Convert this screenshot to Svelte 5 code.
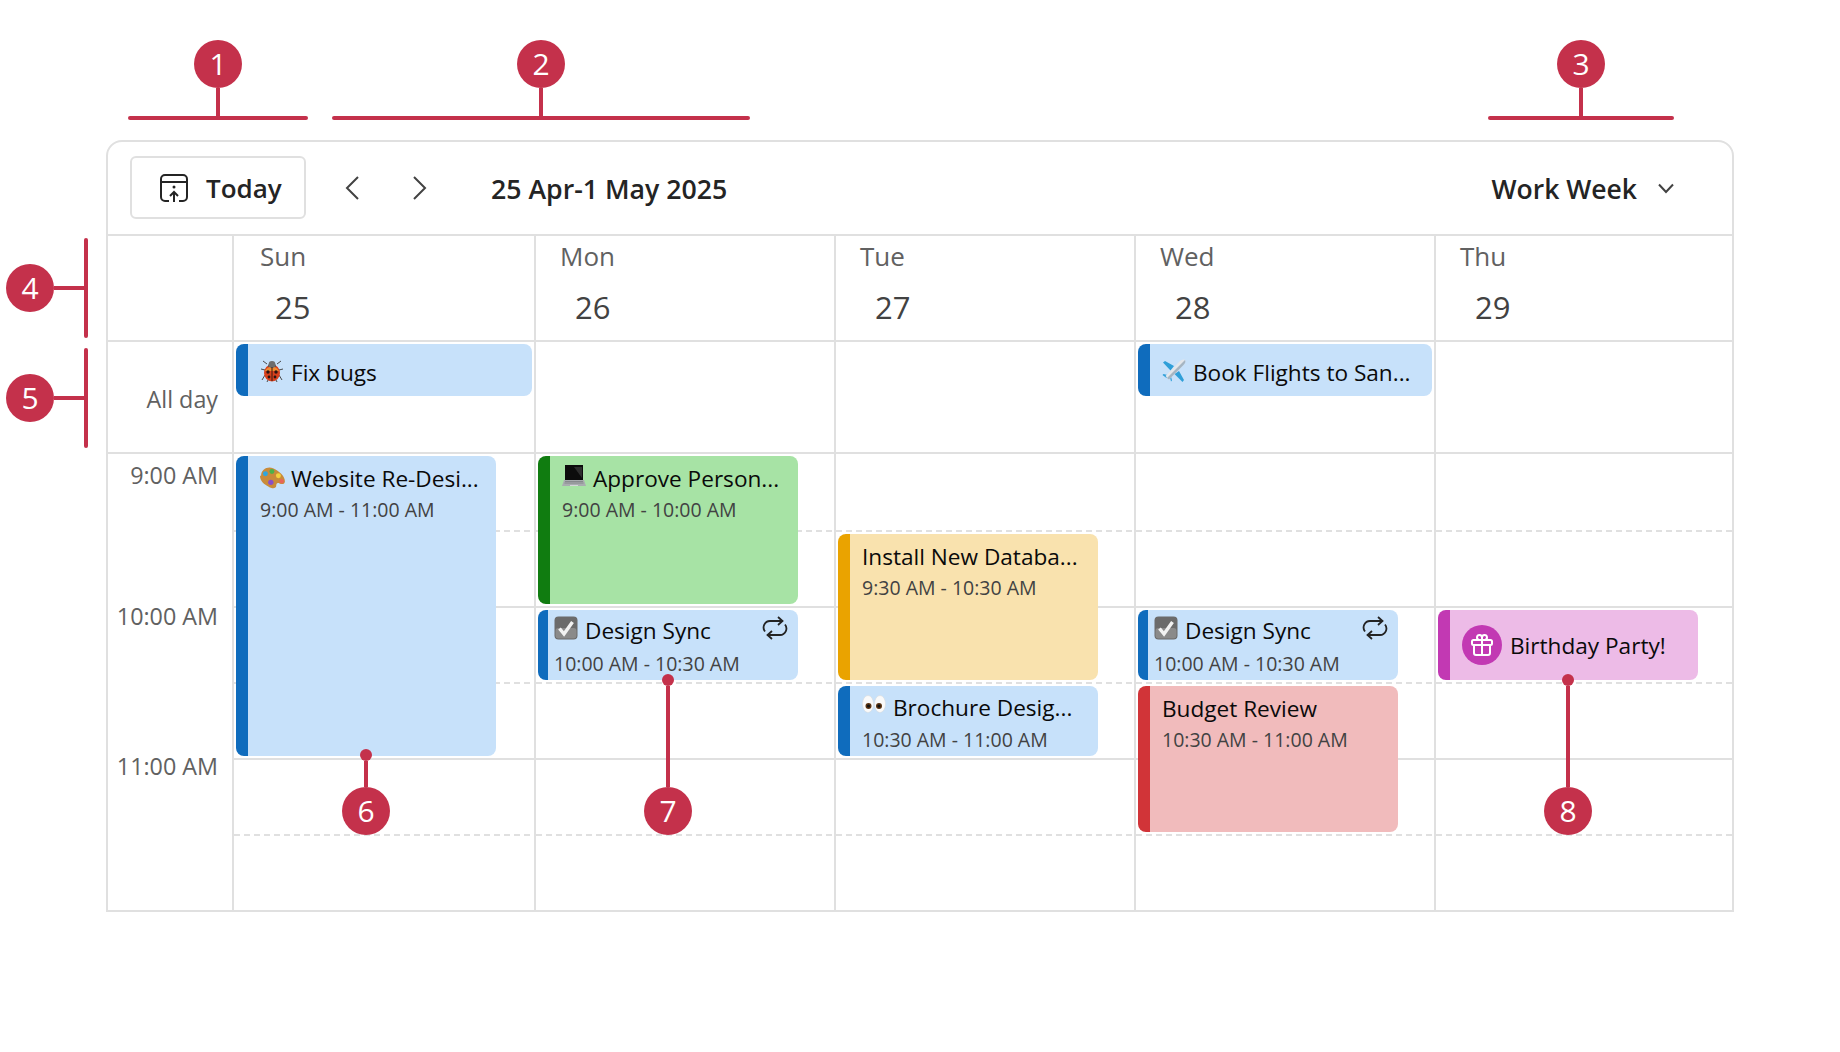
<script>
	const days = [
		{ name: 'Sun', date: 25 },
		{ name: 'Mon', date: 26 },
		{ name: 'Tue', date: 27 },
		{ name: 'Wed', date: 28 },
		{ name: 'Thu', date: 29 }
	];

	// nudge: the labels don't sit at the same distance from their line
	const hours = [
		{ label: '9:00 AM', row: 3, nudge: 13 },
		{ label: '10:00 AM', row: 5, nudge: 0 },
		{ label: '11:00 AM', row: 7, nudge: -2 }
	];

	const slots = [3, 4, 5, 6, 7, 8];

	// col: 2-6 in the grid, row/span are half hour slots starting at row 3
	const events = [
		{ col: 2, row: 2, span: 1, kind: 'allday blue', icon: 'bug', title: 'Fix bugs' },
		{ col: 5, row: 2, span: 1, kind: 'allday blue', icon: 'plane', title: 'Book Flights to San...' },
		{ col: 2, row: 3, span: 4, kind: 'blue', icon: 'palette', title: 'Website Re-Desi...', time: '9:00 AM - 11:00 AM' },
		{ col: 3, row: 3, span: 2, kind: 'green', icon: 'laptop', title: 'Approve Person...', time: '9:00 AM - 10:00 AM' },
		{ col: 3, row: 5, span: 1, kind: 'blue short sync', icon: 'check', title: 'Design Sync', time: '10:00 AM - 10:30 AM', repeat: true },
		{ col: 4, row: 4, span: 2, kind: 'yellow', title: 'Install New Databa...', time: '9:30 AM - 10:30 AM' },
		{ col: 4, row: 6, span: 1, kind: 'blue sync', icon: 'eyes', title: 'Brochure Desig...', time: '10:30 AM - 11:00 AM' },
		{ col: 5, row: 5, span: 1, kind: 'blue short sync', icon: 'check', title: 'Design Sync', time: '10:00 AM - 10:30 AM', repeat: true },
		{ col: 5, row: 6, span: 2, kind: 'red', title: 'Budget Review', time: '10:30 AM - 11:00 AM' },
		{ col: 6, row: 5, span: 1, kind: 'pink birthday', gift: true, title: 'Birthday Party!' }
	];

	const topMarks = [
		{ n: 1, left: 128, width: 180 },
		{ n: 2, left: 332, width: 418 },
		{ n: 3, left: 1488, width: 186 }
	];

	const sideMarks = [
		{ n: 4, top: 238, height: 100 },
		{ n: 5, top: 348, height: 100 }
	];

	const bottomMarks = [
		{ n: 6, left: 366, top: 755, stem: 26 },
		{ n: 7, left: 668, top: 680, stem: 101 },
		{ n: 8, left: 1568, top: 680, stem: 101 }
	];
</script>

{#snippet emoji(name)}
	{#if name === 'bug'}
		<svg class="emoji" viewBox="0 0 24 24">
			<g stroke="#4a4a4a" stroke-width="1" fill="none">
				<path d="M7 5 3 2M17 5l4-3M5 11 1 10M19 11l4-1M5 16l-3 5M19 16l3 5M8 21l-1 2M16 21l1 2" />
			</g>
			<ellipse cx="12" cy="14" rx="8" ry="8.5" fill="#d8401c" />
			<path d="M5 12a8 8 0 0 1 14 0z" fill="#f08a30" />
			<path d="M8 8a4 4 0 0 1 8 0z" fill="#555" />
			<circle cx="12" cy="5.5" r="3.4" fill="#6d6d6d" />
			<path d="M12 8v14" stroke="#3a1a10" stroke-width="1" />
			<circle cx="8" cy="13" r="1.7" fill="#2a1410" />
			<circle cx="16" cy="13" r="1.7" fill="#2a1410" />
			<circle cx="9" cy="18" r="1.4" fill="#2a1410" />
			<circle cx="15" cy="18" r="1.4" fill="#2a1410" />
		</svg>
	{:else if name === 'plane'}
		<svg class="emoji" viewBox="0 0 24 24">
			<path d="M12 7 3 2 1 3.500l7.500 8zM17 12l5 9-1.500 2-8-8z" fill="#2f9fd8" />
			<path d="M5.500 16 1.500 15 .5 16l4 3zM8 18.500 9 22.500l1-1-1-4z" fill="#2f9fd8" />
			<path d="M23 1c-1.500-1-4 0-5.500 1.500L3.500 17 7 20.500 21.500 6C23 4.500 24 2.500 23 1z" fill="#e3e6ea" />
			<path d="M23 1 5 19l2 1.500L21.500 6C23 4.500 24 2.500 23 1z" fill="#a5b5c2" />
		</svg>
	{:else if name === 'palette'}
		<svg class="emoji wide" viewBox="0 0 24 22">
			<path d="M1 9C1 3 7 0 12 2c5 2 11 7 11 12 0 3-3 3-5 2-2-1-3 0-3 2 0 3-4 3-7 1-4-2-8-5-8-10z" fill="#c98b3a" />
			<circle cx="5" cy="7" r="2.300" fill="#2fa6de" />
			<circle cx="11" cy="5" r="2.300" fill="#4eb24a" />
			<circle cx="17" cy="9" r="2.300" fill="#f3d23c" />
			<circle cx="20" cy="14" r="2" fill="#e8655a" />
			<circle cx="10" cy="15" r="2.500" fill="#8a4fc7" />
		</svg>
	{:else if name === 'laptop'}
		<svg class="emoji" viewBox="0 0 24 24">
			<path d="M3 1h18v15H3z" fill="#0c0c0c" />
			<path d="M12 3h8v11z" fill="#2d2d2d" />
			<path d="M2 16h20l2 6H0z" fill="#a9adb0" />
			<path d="M3 17.500h18M2.500 19h19" stroke="#7d8184" stroke-width=".8" />
			<path d="M8 21h8v1H8z" fill="#d5d7d9" />
		</svg>
	{:else if name === 'check'}
		<svg class="emoji" viewBox="0 0 24 24">
			<rect x=".5" y=".5" width="23" height="23" rx="4" fill="#6b6b6b" />
			<rect x="1.500" y="12" width="21" height="10.500" rx="3" fill="#8a8a8a" />
			<path d="M5.500 12.500 10 18l8.500-12" fill="none" stroke="#f2f2f2" stroke-width="3.400" />
		</svg>
	{:else if name === 'eyes'}
		<svg class="emoji" viewBox="0 0 24 24">
			<ellipse cx="6" cy="11" rx="5.500" ry="8.500" fill="#fafafa" stroke="#d8d8d8" stroke-width=".5" />
			<ellipse cx="18" cy="11" rx="5.500" ry="8.500" fill="#fafafa" stroke="#d8d8d8" stroke-width=".5" />
			<circle cx="6.500" cy="13" r="3" fill="#5a3312" />
			<circle cx="17" cy="13" r="3" fill="#5a3312" />
			<circle cx="6.500" cy="13" r="1.600" fill="#111" />
			<circle cx="17" cy="13" r="1.600" fill="#111" />
		</svg>
	{/if}
{/snippet}

<div class="page">
	<section class="calendar">
		<header class="toolbar">
			<button class="today">
				<svg width="28" height="28" viewBox="0 0 28 28" fill="none" stroke="#242424" stroke-width="2">
					<path d="M9 27H5a4 4 0 0 1-4-4V5a4 4 0 0 1 4-4h18a4 4 0 0 1 4 4v18a4 4 0 0 1-4 4h-4" />
					<path d="M1 8h26" />
					<path d="M14 28V18m-4 4 4-4 4 4" />
					<circle cx="14" cy="13" r="1.500" fill="#242424" stroke="none" />
				</svg>
				<span>Today</span>
			</button>
			<button class="nav first" aria-label="Previous">
				<svg width="14" height="24" viewBox="0 0 14 24" fill="none" stroke="#424242" stroke-width="2"><path d="M13 1 2 12l11 11" /></svg>
			</button>
			<button class="nav" aria-label="Next">
				<svg width="14" height="24" viewBox="0 0 14 24" fill="none" stroke="#424242" stroke-width="2"><path d="m1 1 11 11L1 23" /></svg>
			</button>
			<div class="range">25 Apr-1 May 2025</div>
			<div class="view">
				<span>Work Week</span>
				<svg width="16" height="11" viewBox="0 0 16 11" fill="none" stroke="#424242" stroke-width="2"><path d="m1 1.500 7 7.500 7-7.500" /></svg>
			</div>
		</header>

		<div class="grid">
			<div class="corner"></div>
			{#each days as d, i}
				<div class="dayhead" class:first={i === 0} class:last={i === 4} style="grid-column:{i + 2}">
					<div class="dayname">{d.name}</div>
					<div class="daydate">{d.date}</div>
				</div>
			{/each}

			<div class="allday-label">All day</div>
			{#each days as d, i}
				<div class="allday-cell" class:last={i === 4} style="grid-column:{i + 2}"></div>
			{/each}

			{#each hours as h}
				<div class="hour" style="grid-row:{h.row} / span 2">
					<span style="margin-top:{h.nudge}px">{h.label}</span>
				</div>
			{/each}

			{#each days as d, i}
				{#each slots as s}
					<div
						class="slot"
						class:dash={s % 2 === 1}
						class:solid={s % 2 === 0 && s < 8}
						class:last={i === 4}
						style="grid-column:{i + 2};grid-row:{s}"
					></div>
				{/each}
			{/each}

			{#each events as e}
				<article class="event {e.kind}" style="grid-column:{e.col};grid-row:{e.row} / span {e.span}">
					{#if e.gift}
						<span class="gift">
							<svg width="24" height="24" viewBox="0 0 24 24" fill="none" stroke="#fff" stroke-width="2">
								<rect x="2" y="7" width="20" height="5" rx="1.500" />
								<path d="M4 12v8a2 2 0 0 0 2 2h12a2 2 0 0 0 2-2v-8M12 7v15" />
								<path d="M12 7H9a2.500 2.500 0 1 1 3-2.500zM12 7h3a2.500 2.500 0 1 0-3-2.500z" />
							</svg>
						</span>
					{/if}
					<div class="content">
						<div class="title">
							{#if e.icon}{@render emoji(e.icon)}{/if}
							<span>{e.title}</span>
							{#if e.repeat}
								<svg class="repeat" width="26" height="24" viewBox="0 0 26 24" fill="none" stroke="#242424" stroke-width="1.800">
									<path d="M20 5H8a6.500 6.500 0 0 0-5 10.500M6 19h12a6.500 6.500 0 0 0 5-10.500" />
									<path d="m16 1 4.500 4-4.500 4M10 15l-4.500 4 4.500 4" />
								</svg>
							{/if}
						</div>
						{#if e.time}<div class="time">{e.time}</div>{/if}
					</div>
				</article>
			{/each}
		</div>
	</section>

	{#each topMarks as m}
		<div class="mark-top" style="left:{m.left}px;width:{m.width}px">
			<span class="badge">{m.n}</span>
			<span class="stem"></span>
			<span class="bar"></span>
		</div>
	{/each}

	{#each sideMarks as m}
		<div class="mark-side" style="top:{m.top}px;height:{m.height}px">
			<span class="badge">{m.n}</span>
			<span class="stem"></span>
			<span class="bar"></span>
		</div>
	{/each}

	{#each bottomMarks as m}
		<div class="mark-bottom" style="left:{m.left}px;top:{m.top}px">
			<span class="dot"></span>
			<span class="stem" style="height:{m.stem}px"></span>
			<span class="badge">{m.n}</span>
		</div>
	{/each}
</div>

<style>
	:global(body) {
		margin: 0;
		background: #fff;
	}
	.page {
		position: relative;
		height: 1052px;
		padding: 140px 106px 0;
		box-sizing: border-box;
		font-family: 'Open Sans', 'Noto Sans', sans-serif;
		color: #242424;
	}
	.calendar {
		width: 1628px;
		height: 772px;
		box-sizing: border-box;
		border: 2px solid #e0e0e0;
		border-radius: 16px 16px 0 0;
		display: flex;
		flex-direction: column;
	}
	.toolbar {
		flex: none;
		height: 94px;
		box-sizing: border-box;
		border-bottom: 2px solid #e0e0e0;
		display: flex;
		align-items: flex-start;
		padding: 14px 0 0 22px;
	}
	button {
		background: none;
		border: 0;
		padding: 0;
		font: inherit;
		color: inherit;
		display: flex;
		align-items: center;
	}
	.today {
		width: 176px;
		height: 63px;
		box-sizing: border-box;
		border: 2px solid #e0e0e0;
		border-radius: 6px;
		padding-left: 28px;
		gap: 18px;
		font-size: 26px;
		font-weight: 600;
	}
	.today span {
		margin-top: 1px;
	}
	.nav {
		height: 63px;
		margin-left: 54px;
	}
	.nav.first {
		margin-left: 39px;
	}
	.range {
		margin-left: 64px;
		font-size: 26.7px;
		font-weight: 600;
		line-height: 66px;
		white-space: nowrap;
	}
	.view {
		margin-left: auto;
		margin-right: 58px;
		display: flex;
		align-items: center;
		gap: 21px;
		height: 65px;
		font-size: 26.5px;
		font-weight: 600;
	}
	.grid {
		flex: 1;
		display: grid;
		grid-template-columns: 126px 302px 300px 300px 300px 296px;
		grid-template-rows: 106px 112px 78px 76px 76px 76px 76px 74px;
	}
	.corner,
	.dayhead,
	.allday-label,
	.allday-cell {
		border-bottom: 2px solid #e0e0e0;
		border-right: 2px solid #e0e0e0;
		box-sizing: border-box;
	}
	.corner {
		grid-column: 1;
		grid-row: 1;
	}
	.dayhead {
		grid-row: 1;
		padding: 0 0 0 24px;
	}
	.dayhead.first {
		padding-left: 26px;
	}
	.dayhead.first .daydate {
		margin-left: 15px;
	}
	.dayname {
		font-size: 26px;
		line-height: 36px;
		margin-top: 2px;
		color: #616161;
	}
	.daydate {
		font-size: 31px;
		line-height: 42px;
		margin: 12px 0 0 15px;
		color: #424242;
	}
	.allday-label {
		grid-column: 1;
		grid-row: 2;
		font-size: 23.3px;
		color: #616161;
		text-align: right;
		padding: 41px 14px 0 0;
	}
	.allday-cell {
		grid-row: 2;
	}
	.hour {
		grid-column: 1;
		box-sizing: border-box;
		display: flex;
		justify-content: flex-end;
		align-items: flex-start;
		font-size: 23.3px;
		line-height: 16px;
		color: #616161;
		border-right: 2px solid #e0e0e0;
		padding-right: 14px;
	}
	.slot {
		box-sizing: border-box;
		border-right: 2px solid #e0e0e0;
	}
	.dash {
		background: linear-gradient(to right, #e0e0e0 6px, transparent 6px) left bottom / 10px 2px repeat-x;
	}
	.solid {
		background: linear-gradient(#e0e0e0, #e0e0e0) left bottom / 100% 2px no-repeat;
	}
	.last {
		border-right: 0;
	}
	.event {
		width: 260px;
		margin: 2px 0 4px 2px;
		box-sizing: border-box;
		border-radius: 8px;
		border-left: 12px solid;
		padding: 0 0 0 12px;
		overflow: hidden;
		z-index: 1;
		display: flex;
	}
	.allday {
		width: auto;
		margin: 2px 4px 0 2px;
		height: 52px;
	}
	.blue {
		background: #c7e1fa;
		border-left-color: #0f6cbd;
	}
	.green {
		background: #a7e3a5;
		border-left-color: #107c10;
	}
	.yellow {
		background: #f9e2ae;
		border-left-color: #eaa300;
	}
	.red {
		background: #f1bbbc;
		border-left-color: #d13438;
	}
	.pink {
		background: #edbbe7;
		border-left-color: #c239b3;
	}
	.short {
		border-left-width: 10px;
		padding-left: 6px;
	}
	.content {
		flex: 1;
		min-width: 0;
	}
	.title {
		display: flex;
		align-items: center;
		gap: 7px;
		font-size: 22.6px;
		line-height: 32px;
		margin-top: 7px;
		color: #0a0a0a;
		white-space: nowrap;
	}
	.sync .title {
		margin-top: 6px;
	}
	.sync .time {
		margin-top: 2px;
	}
	.short.sync .title {
		margin-top: 5px;
	}
	.short.sync .time {
		margin-top: 3px;
	}
	.allday .title {
		margin-top: 13px;
	}
	.emoji {
		flex: none;
		width: 24px;
		height: 24px;
		margin-top: -6px;
	}
	.emoji.wide {
		width: 26px;
		margin: -2px -2px 0 0;
	}
	.allday .emoji {
		margin-top: -5px;
	}
	.repeat {
		margin: -6px 10px 0 auto;
	}
	.time {
		font-size: 19.5px;
		line-height: 28px;
		margin-top: 1px;
		color: #424242;
		white-space: nowrap;
	}
	.birthday {
		align-items: center;
		padding-left: 12px;
		gap: 8px;
	}
	.birthday .title {
		margin-top: 2px;
	}
	.gift {
		flex: none;
		width: 40px;
		height: 40px;
		border-radius: 50%;
		background: #c239b3;
		display: flex;
		align-items: center;
		justify-content: center;
	}
	.badge {
		width: 48px;
		height: 48px;
		border-radius: 50%;
		background: #c4314b;
		color: #fff;
		font-size: 30px;
		line-height: 48px;
		text-align: center;
		flex: none;
	}
	.stem,
	.bar,
	.dot {
		background: #c4314b;
		display: block;
		flex: none;
	}
	.mark-top {
		position: absolute;
		top: 40px;
		height: 80px;
		display: flex;
		flex-direction: column;
		align-items: center;
	}
	.mark-top .stem {
		width: 4px;
		height: 28px;
	}
	.mark-top .bar {
		width: 100%;
		height: 4px;
		border-radius: 2px;
	}
	.mark-side {
		position: absolute;
		left: 6px;
		display: flex;
		align-items: center;
	}
	.mark-side .stem {
		width: 30px;
		height: 4px;
	}
	.mark-side .bar {
		width: 4px;
		height: 100%;
		border-radius: 2px;
	}
	.mark-bottom {
		position: absolute;
		width: 48px;
		margin-left: -24px;
		margin-top: -6px;
		z-index: 2;
		display: flex;
		flex-direction: column;
		align-items: center;
	}
	.mark-bottom .dot {
		width: 12px;
		height: 12px;
		border-radius: 50%;
	}
	.mark-bottom .stem {
		width: 4px;
	}
</style>
